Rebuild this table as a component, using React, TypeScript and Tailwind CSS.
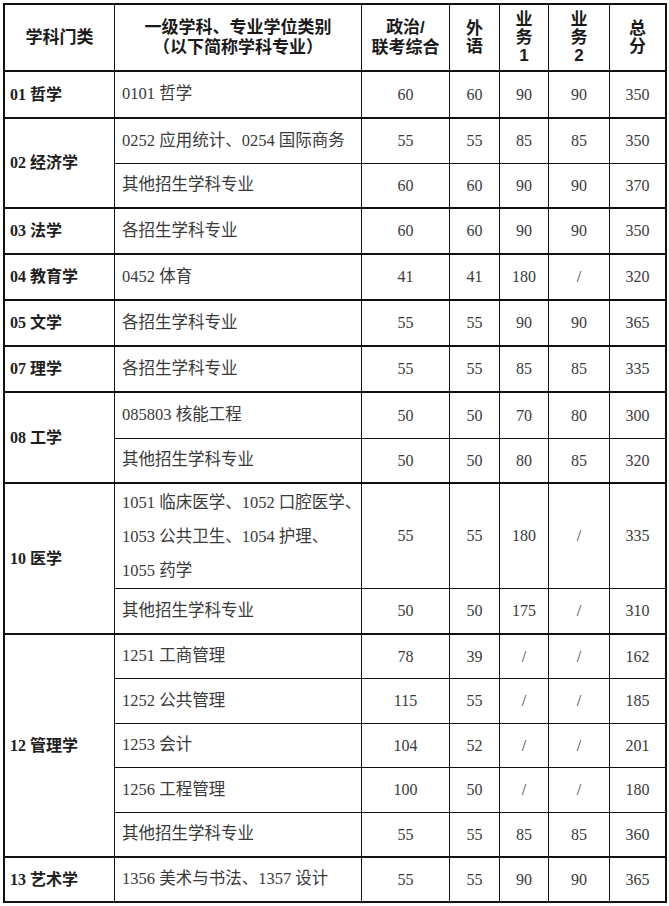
import React from "react";

type Row = { h: string; name: React.ReactNode; v: string[]; multi?: boolean };
type Group = { cat: string; rows: Row[] };

const groups: Group[] = [
  { cat: "01 哲学", rows: [{ h: "h-[47px]", name: "0101 哲学", v: ["60", "60", "90", "90", "350"] }] },
  {
    cat: "02 经济学",
    rows: [
      { h: "h-[45px]", name: "0252 应用统计、0254 国际商务", v: ["55", "55", "85", "85", "350"] },
      { h: "h-[45px]", name: "其他招生学科专业", v: ["60", "60", "90", "90", "370"] },
    ],
  },
  { cat: "03 法学", rows: [{ h: "h-[46px]", name: "各招生学科专业", v: ["60", "60", "90", "90", "350"] }] },
  { cat: "04 教育学", rows: [{ h: "h-[46px]", name: "0452 体育", v: ["41", "41", "180", "/", "320"] }] },
  { cat: "05 文学", rows: [{ h: "h-[46px]", name: "各招生学科专业", v: ["55", "55", "90", "90", "365"] }] },
  { cat: "07 理学", rows: [{ h: "h-[46px]", name: "各招生学科专业", v: ["55", "55", "85", "85", "335"] }] },
  {
    cat: "08 工学",
    rows: [
      { h: "h-[46px]", name: "085803 核能工程", v: ["50", "50", "70", "80", "300"] },
      { h: "h-[45px]", name: "其他招生学科专业", v: ["50", "50", "80", "85", "320"] },
    ],
  },
  {
    cat: "10 医学",
    rows: [
      {
        h: "h-[105px]",
        multi: true,
        name: (
          <>
            <span className="block">1051 临床医学、1052 口腔医学、</span>
            <span className="block">1053 公共卫生、1054 护理、</span>
            <span className="block">1055 药学</span>
          </>
        ),
        v: ["55", "55", "180", "/", "335"],
      },
      { h: "h-[46px]", name: "其他招生学科专业", v: ["50", "50", "175", "/", "310"] },
    ],
  },
  {
    cat: "12 管理学",
    rows: [
      { h: "h-[44px]", name: "1251 工商管理", v: ["78", "39", "/", "/", "162"] },
      { h: "h-[45px]", name: "1252 公共管理", v: ["115", "55", "/", "/", "185"] },
      { h: "h-[44px]", name: "1253 会计", v: ["104", "52", "/", "/", "201"] },
      { h: "h-[45px]", name: "1256 工程管理", v: ["100", "50", "/", "/", "180"] },
      { h: "h-[45px]", name: "其他招生学科专业", v: ["55", "55", "85", "85", "360"] },
    ],
  },
  { cat: "13 艺术学", rows: [{ h: "h-[45px]", name: "1356 美术与书法、1357 设计", v: ["55", "55", "90", "90", "365"] }] },
];

const hd =
  "border-r border-b-2 border-[#111] text-center align-middle font-bold text-[17px] text-[#1a1a1a] p-0 font-['Liberation_Sans','Noto_Sans_CJK_SC',sans-serif]";

export default function App() {
  return (
    <div className="w-[669px] h-[906px] bg-white pt-[3px] pl-[3px]">
      <table
        className="table-fixed border-separate border-spacing-0 border-t-2 border-l-2 border-[#111] w-[664px]"
        style={{ fontFamily: '"Liberation Serif", "Noto Sans CJK SC", serif' }}
      >
        <colgroup>
          <col className="w-[110px]" />
          <col className="w-[247px]" />
          <col className="w-[88px]" />
          <col className="w-[50px]" />
          <col className="w-[49px]" />
          <col className="w-[61px]" />
          <col className="w-[57px]" />
        </colgroup>
        <thead>
          <tr>
            <th className={`${hd} h-[67px]`}>学科门类</th>
            <th className={`${hd} leading-[20px]`}>
              一级学科、专业学位类别
              <br />
              （以下简称学科专业）
            </th>
            <th className={`${hd} leading-[20px]`}>
              政治/
              <br />
              联考综合
            </th>
            <th className={`${hd} leading-[18px]`}>
              外<br />语
            </th>
            <th className={`${hd} leading-[18px]`}>
              业<br />务<br />1
            </th>
            <th className={`${hd} leading-[18px]`}>
              业<br />务<br />2
            </th>
            <th className={`${hd} border-r-2 leading-[18px]`}>
              总<br />分
            </th>
          </tr>
        </thead>
        <tbody>
          {groups.map((g) =>
            g.rows.map((r, ri) => {
              const last = ri === g.rows.length - 1;
              const bb = last ? "border-b-2" : "border-b";
              return (
                <tr key={g.cat + ri}>
                  {ri === 0 && (
                    <td
                      rowSpan={g.rows.length}
                      className="p-0 border-r border-b-2 border-[#111] pl-[5px] align-middle font-bold text-[16px] text-[#1e1e1e] whitespace-nowrap"
                    >
                      {g.cat}
                    </td>
                  )}
                  <td
                    className={`${r.h} ${bb} p-0 border-r border-[#111] pl-[7px] align-middle text-[16.5px] text-[#3a3a3a] whitespace-nowrap ${
                      r.multi ? "leading-[34px] pt-[2px]" : ""
                    }`}
                  >
                    {r.name}
                  </td>
                  {r.v.map((x, i) => (
                    <td
                      key={i}
                      className={`${bb} p-0 ${i === 4 ? "border-r-2" : "border-r"} border-[#111] text-center align-middle text-[16px] text-[#3a3a3a]`}
                    >
                      {x}
                    </td>
                  ))}
                </tr>
              );
            })
          )}
        </tbody>
      </table>
    </div>
  );
}
